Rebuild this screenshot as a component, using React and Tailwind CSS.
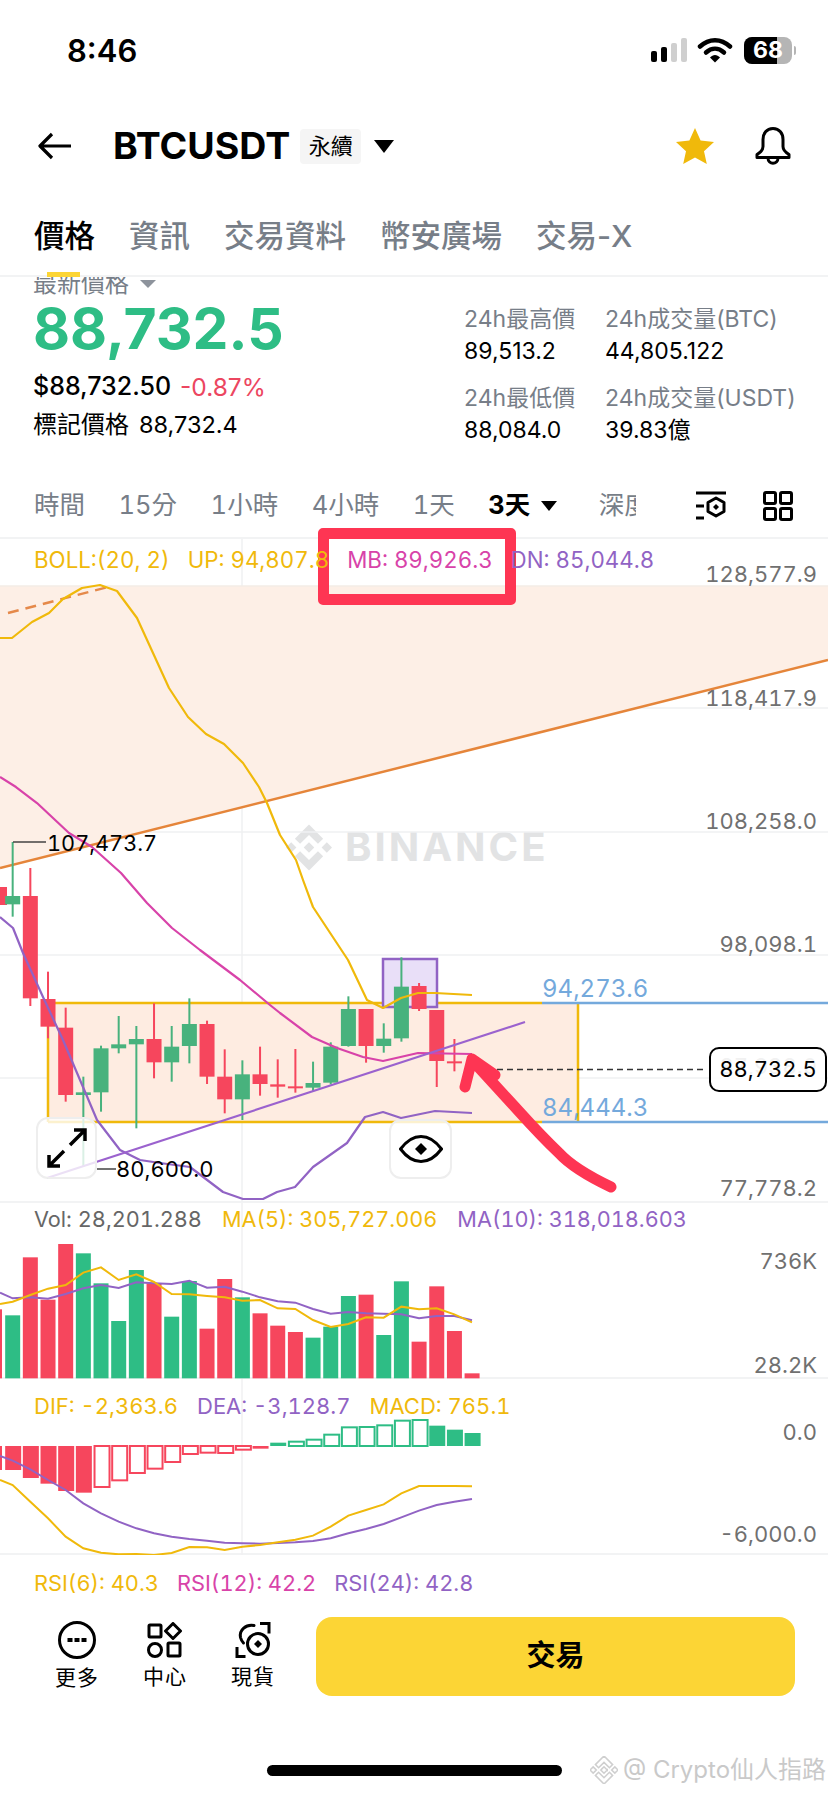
import React from "react";

const YELLOW = "#F0B90B";
const MAGENTA = "#D843A9";
const PURPLE = "#9163C4";
const GREEN = "#2EBD85";
const RED = "#F6465D";
const CANDLE_GREEN = "#48B27D";

const slotX = (i) => 12.67 + 17.67 * i;
const line = (pts) => pts.map((p) => p.join(",")).join(" ");

// zoomed coordinates, y is page y = base + z / 3
const scaled = (rows, base) => rows.map(([x, z]) => [x / 3, base + z / 3]);

const upperBand = [
  [0, 638], [12, 638], [32, 622], [49, 613], [63, 599], [82, 588], [100, 585], [117, 591], [137, 618], [153, 653],
  [169, 688], [188, 717], [206, 734], [224, 744], [243, 763], [259, 787], [267, 803], [280, 835], [296, 860], [303, 880],
  [313, 907], [348, 960], [367, 1000], [383, 1008], [401, 998], [418, 993], [435, 993], [472, 995],
];
const midBand = [
  [0, 777], [16, 787], [37, 803], [69, 833], [92, 847], [121, 873], [147, 903], [172, 928], [200, 950], [240, 980],
  [270, 1005], [280, 1013], [312, 1037], [337, 1048], [363, 1057], [383, 1061], [418, 1053], [472, 1054],
];
const lowerBand = [
  [0, 917], [13, 928], [23, 953], [43, 997], [63, 1040], [83, 1087], [97, 1120], [120, 1150], [140, 1160], [160, 1163],
  [190, 1167], [223, 1192], [243, 1199], [263, 1199], [277, 1192], [295, 1187], [313, 1167], [347, 1143], [365, 1117],
  [383, 1112], [401, 1118], [435, 1111], [472, 1113],
];

// [colour, body top, body bottom, wick top, wick bottom], slot by slot
const candles = [
  ["g", 48, 73, -114, 110], ["r", 48, 355, -36, 378], ["r", 357, 440, 275, 475], ["r", 443, 645, 383, 665],
  ["g", 637, 645, 590, 860], ["g", 505, 637, 497, 695], ["g", 493, 505, 408, 520], ["g", 477, 493, 438, 745],
  ["r", 477, 547, 370, 595], ["g", 500, 547, 438, 605], ["g", 432, 498, 355, 550], ["r", 432, 590, 422, 612],
  ["r", 590, 658, 508, 700], ["g", 583, 658, 541, 720], ["r", 583, 612, 500, 647], ["r", 613, 620, 538, 653],
  ["r", 619, 625, 507, 638], ["g", 609, 623, 545, 635], ["g", 500, 608, 487, 613], ["g", 387, 498, 349, 500],
  ["r", 387, 498, 387, 548], ["g", 476, 498, 430, 518], ["g", 320, 475, 232, 485], ["r", 318, 387, 309, 393],
  ["r", 390, 543, 390, 621], ["r", 544, 550, 477, 574],
];

const volumes = [
  ["g", 376], ["r", 202], ["r", 329], ["r", 162], ["g", 190], ["g", 280], ["g", 393], ["g", 240], ["r", 280],
  ["g", 380], ["g", 273], ["r", 416], ["r", 267], ["g", 322], ["r", 370], ["r", 407], ["r", 426], ["g", 443],
  ["g", 410], ["g", 318], ["r", 314], ["g", 435], ["g", 274], ["r", 455], ["r", 289], ["r", 423], ["r", 550],
];
const ma5 = scaled(
  [[0, 342], [38, 335], [91, 315], [144, 296], [197, 285], [250, 248], [303, 232], [356, 270], [409, 253], [462, 276],
    [515, 312], [568, 313], [621, 318], [674, 322], [727, 332], [780, 330], [833, 355], [886, 357], [939, 390], [992, 411],
    [1045, 402], [1098, 382], [1151, 383], [1204, 350], [1257, 358], [1310, 355], [1363, 373], [1416, 397]],
  1190
);
const ma10 = scaled(
  [[0, 308], [38, 325], [91, 322], [144, 326], [197, 312], [250, 295], [303, 285], [356, 294], [409, 277], [462, 280],
    [515, 282], [568, 272], [621, 293], [674, 290], [727, 305], [780, 322], [833, 334], [886, 338], [939, 357], [992, 371],
    [1045, 366], [1098, 370], [1151, 371], [1204, 373], [1257, 385], [1310, 378], [1363, 378], [1416, 391]],
  1190
);

// [colour, end z, hollow]
const macdBars = [
  ["r", 240, 0], ["r", 264, 0], ["r", 281, 0], ["r", 303, 0], ["r", 308, 0], ["r", 291, 1], ["r", 271, 1], ["r", 249, 1],
  ["r", 236, 1], ["r", 216, 1], ["r", 192, 1], ["r", 188, 1], ["r", 189, 1], ["r", 179, 1], ["r", 176, 0], ["g", 158, 0],
  ["g", 155, 1], ["g", 149, 1], ["g", 134, 1], ["g", 112, 1], ["g", 111, 1], ["g", 106, 1], ["g", 92, 1], ["g", 90, 1],
  ["g", 107, 0], ["g", 119, 0], ["g", 129, 0],
];
const dif = scaled(
  [[0, 270], [38, 285], [91, 335], [144, 385], [197, 440], [250, 475], [303, 488], [356, 493], [409, 492], [462, 495],
    [515, 489], [568, 471], [621, 472], [674, 480], [727, 470], [780, 465], [833, 457], [886, 449], [939, 437], [992, 410],
    [1045, 377], [1098, 360], [1151, 343], [1204, 310], [1257, 288], [1310, 288], [1363, 288], [1416, 289]],
  1390
);
const dea = scaled(
  [[0, 198], [38, 212], [91, 238], [144, 270], [197, 300], [250, 340], [303, 370], [356, 395], [409, 415], [462, 430],
    [515, 440], [568, 447], [621, 452], [674, 458], [727, 460], [780, 461], [833, 459], [886, 457], [939, 453], [992, 445],
    [1045, 430], [1098, 417], [1151, 402], [1204, 382], [1257, 362], [1310, 345], [1363, 335], [1416, 327]],
  1390
);

const BINANCE_MARK =
  "M38.73 53.2l24.59-24.58 24.6 24.6 14.3-14.31L63.32 0 24.43 38.9zM0 63.31l14.3-14.31 14.31 14.31-14.31 14.3zM38.73 73.41l24.59 24.59 24.6-24.6 14.31 14.29-38.9 38.91-38.91-38.88zM98 63.31l14.3-14.31 14.31 14.3-14.31 14.32zM77.83 63.3L63.32 48.78 52.59 59.51l-1.24 1.23-2.54 2.54 14.51 14.5 14.51-14.5z";

const StatusBar = () => (
  <div className="h-[100px] flex items-center justify-between pl-[67px] pr-[32px]">
    <span className="text-[31px] font-semibold text-black leading-none">8:46</span>
    <div className="flex items-center">
      <div className="flex items-end gap-[4px] h-[24px]">
        <div className="w-[6px] h-[11px] rounded-[2px] bg-black" />
        <div className="w-[6px] h-[15px] rounded-[2px] bg-black" />
        <div className="w-[6px] h-[19px] rounded-[2px] bg-[#cfcfcf]" />
        <div className="w-[6px] h-[24px] rounded-[2px] bg-[#cfcfcf]" />
      </div>
      <svg width="36" height="26" viewBox="0 0 36 26" className="ml-[10px]">
        <path d="M3 9.5C12 1 24 1 33 9.5" fill="none" stroke="black" strokeWidth="4.5" strokeLinecap="round" />
        <path d="M9 15.5C14.5 10.5 21.5 10.5 27 15.5" fill="none" stroke="black" strokeWidth="4.5" strokeLinecap="round" />
        <path d="M13 20.5C16 17 20 17 23 20.5L18 25.5z" fill="black" />
      </svg>
      <div className="ml-[11px] relative w-[48px] h-[27px] rounded-[8px] overflow-hidden flex bg-[#b5b5b5]">
        <div className="w-[33px] h-full bg-black" />
        <span className="absolute inset-0 flex items-center justify-center text-[23px] font-bold text-white leading-none">68</span>
      </div>
      <div className="ml-[2px] w-[2px] h-[9px] rounded-r-[2px] bg-[#b5b5b5]" />
    </div>
  </div>
);

const Header = () => (
  <div className="h-[92px] flex items-center pl-[38px] pr-[36px]">
    <svg width="34" height="28" viewBox="0 0 34 28">
      <path d="M33 14H3M14 2L2 14l12 12" fill="none" stroke="black" strokeWidth="3.2" strokeLinejoin="round" />
    </svg>
    <span className="ml-[41px] text-[37.5px] font-bold text-black leading-none">BTCUSDT</span>
    <span className="ml-[10px] w-[61px] h-[35px] rounded-[4px] bg-[#f5f5f5] flex items-center justify-center text-[22px] text-black">永續</span>
    <svg width="20" height="13" viewBox="0 0 20 13" className="ml-[13px]">
      <path d="M0 0h20L10 13z" fill="black" />
    </svg>
    <svg width="38" height="36" viewBox="0 0 38 36" className="ml-auto">
      <path d="M19 0l5.6 12.6L38 14l-10 9.2L30.8 36 19 29.4 7.2 36 10 23.2 0 14l13.4-1.4z" fill="#F0B90B" />
    </svg>
    <svg width="38" height="38" viewBox="0 0 36 38" className="ml-[40px]">
      <path
        d="M18 1.5c-6.5 0-10 5-10 11v7c0 3-2 5.500-6 8v3h32v-3c-4-2.500-6-5-6-8v-7c0-6-3.500-11-10-11zM13 31c0 7 10 7 10 0"
        fill="none"
        stroke="black"
        strokeWidth="3"
        strokeLinejoin="round"
      />
    </svg>
  </div>
);

const Tabs = () => (
  <div className="h-[85px] flex items-center pt-[4px] pl-[34px] gap-[34px] text-[30.5px] font-medium text-[#777e88] border-b-2 border-[#f2f3f4]">
    <span className="relative text-black leading-[79px]">
      價格
      <span className="absolute left-[13px] -bottom-[2px] w-[33px] h-[5px] bg-[#FCD535]" />
    </span>
    <span>資訊</span>
    <span>交易資料</span>
    <span>幣安廣場</span>
    <span>交易-X</span>
  </div>
);

const PriceInfo = () => (
  <div className="h-[197px] overflow-hidden flex">
    <div className="w-[430px] pl-[33px] -mt-[5px]">
      <div className="flex items-center h-[24px] text-[24px] leading-[24px] text-[#777e88]">
        最新價格
        <svg width="16" height="8" viewBox="0 0 16 8" className="ml-[11px]">
          <path d="M0 0h16L8 8z" fill="#8d939c" />
        </svg>
      </div>
      <div className="mt-[1px] h-[64px] text-[57px] leading-[64px] font-bold text-[#2EBD85]">88,732.5</div>
      <div className="mt-[11px] h-[30px] flex items-center text-[25px] font-medium text-black">
        $88,732.50
        <span className="ml-[9px] text-[24.5px] font-normal text-[#EC4660]">-0.87%</span>
      </div>
      <div className="mt-[8px] h-[30px] flex items-center text-[24px] text-black">
        標記價格
        <span className="ml-[10px] text-[23.5px]">88,732.4</span>
      </div>
    </div>
    <div className="ml-[34px] pt-[27px] grid grid-cols-[141px_auto] grid-rows-[32px_47px_32px_32px] text-[23px] leading-[30px]">
      <span className="text-[#777e88]">24h最高價</span>
      <span className="text-[#777e88]">24h成交量(BTC)</span>
      <span className="text-black">89,513.2</span>
      <span className="text-black">44,805.122</span>
      <span className="text-[#777e88]">24h最低價</span>
      <span className="text-[#777e88]">24h成交量(USDT)</span>
      <span className="text-black">88,084.0</span>
      <span className="text-black">39.83億</span>
    </div>
  </div>
);

const TimeRow = () => (
  <div className="h-[65px] flex items-center pl-[34px] pr-[35px] gap-[33.5px] text-[25.5px] tabular-nums text-[#777e88] border-b-2 border-[#f2f3f4]">
    <span>時間</span>
    <span>15分</span>
    <span>1小時</span>
    <span>4小時</span>
    <span>1天</span>
    <span className="flex items-center font-bold text-black">
      3天
      <svg width="16" height="10" viewBox="0 0 16 10" className="ml-[11px]">
        <path d="M0 0h16L8 10z" fill="black" />
      </svg>
    </span>
    <span className="ml-[8px] w-[37px] overflow-hidden whitespace-nowrap">深度</span>
    <svg width="32" height="30" viewBox="0 0 32 30" className="ml-auto">
      <path d="M1 2h30M1 15h8M1 27h8" fill="none" stroke="black" strokeWidth="3" />
      <path d="M21 7l8 4.500v9L21 25l-8-4.500v-9z" fill="none" stroke="black" strokeWidth="3" strokeLinejoin="round" />
      <path d="M21 13l3 3-3 3-3-3z" fill="black" />
    </svg>
    <svg width="30" height="30" viewBox="0 0 30 30" className="ml-[3px]">
      <g fill="none" stroke="black" strokeWidth="3">
        <rect x="1.500" y="1.500" width="11" height="11" rx="1.500" />
        <rect x="17.500" y="1.500" width="11" height="11" rx="1.500" />
        <rect x="1.500" y="17.500" width="11" height="11" rx="1.500" />
        <rect x="17.500" y="17.500" width="11" height="11" rx="1.500" />
      </g>
    </svg>
  </div>
);

const MainChart = () => (
  <div className="relative h-[664px] border-b-2 border-[#f2f3f4] tabular-nums">
    <div className="relative z-10 h-[42px] flex items-center pl-[34px] gap-[18px] text-[22.3px] whitespace-nowrap">
      <span className="text-[#F0B90B]">BOLL:(20, 2)</span>
      <span className="text-[#F0B90B]">UP: 94,807.8</span>
      <span className="text-[#D843A9]">MB: 89,926.3</span>
      <span className="text-[#9163C4]">DN: 85,044.8</span>
    </div>

    {/* watermark sits under the chart lines */}
    <svg width="46" height="51" viewBox="0 0 126.61 126.61" className="absolute left-[286px] top-[283px]">
      <path d={BINANCE_MARK} fill="#e2e3e4" />
    </svg>
    <span className="absolute left-[345px] top-[288px] text-[40px] leading-[40px] font-bold tracking-[3px] text-[#e2e3e4]">BINANCE</span>

    <svg viewBox="0 539 828 663" className="absolute left-0 top-0 w-[828px] h-[663px]">
      <path d="M242 539V1202M0 708H828M0 832H828M0 955H828M0 1078H828" stroke="#f0f1f2" strokeWidth="1.500" fill="none" />
      <polygon points="0,586 828,586 828,660 0,868" fill="#fdefe6" />
      <path d="M0 586H828" stroke="#f3ece6" strokeWidth="1.500" />
      <rect x="48" y="1003" width="530" height="119" fill="#feece1" />
      <path d="M48 1122V1003H542M542 1122H48M578 1003V1122" fill="none" stroke="#F0B90B" strokeWidth="2.500" />
      <path d="M542 1003H828M542 1122H828" fill="none" stroke="#74A9DC" strokeWidth="2.500" />
      <path d="M8 613L108 587" fill="none" stroke="#E5894A" strokeWidth="2.500" strokeDasharray="11 7" />
      <path d="M0 868L828 660" stroke="#E5853A" strokeWidth="2.500" />
      <rect x="383" y="959" width="54" height="48" fill="#e9dff8" stroke="#9163C4" strokeWidth="2.500" />

      <rect x="0" y="887" width="7" height="18" fill={RED} />
      {candles.map(([c, top, bottom, wickTop, wickBottom], i) => {
        const fill = c === "g" ? CANDLE_GREEN : RED;
        return (
          <g key={i} fill={fill}>
            <rect x={slotX(i) - 1} y={880 + wickTop / 3} width="2" height={(wickBottom - wickTop) / 3} />
            <rect x={slotX(i) - 7.5} y={880 + top / 3} width="15" height={Math.max((bottom - top) / 3, 2)} />
          </g>
        );
      })}
      <path d="M13 842H46M97 1169H116" fill="none" stroke="#444" strokeWidth="1.500" />

      <g fill="none" strokeWidth="2.200" strokeLinejoin="round">
        <polyline points={line(upperBand)} stroke={YELLOW} />
        <polyline points={line(midBand)} stroke={MAGENTA} />
        <polyline points={line(lowerBand)} stroke={PURPLE} />
        <path d="M47 1178L525 1022" stroke="#9B62CE" />
      </g>
      <path d="M497 1069.500H706" stroke="#333" strokeWidth="1.500" strokeDasharray="6 4" />
    </svg>

    {/* axis labels */}
    <div className="absolute right-[11px] top-[21px] text-[22px] leading-[28px] text-[#707070]">128,577.9</div>
    <div className="absolute right-[11px] top-[145px] text-[22px] leading-[28px] text-[#707070]">118,417.9</div>
    <div className="absolute right-[11px] top-[268px] text-[22px] leading-[28px] text-[#707070]">108,258.0</div>
    <div className="absolute right-[11px] top-[391px] text-[22px] leading-[28px] text-[#707070]">98,098.1</div>
    <div className="absolute right-[11px] top-[513px] text-[22px] leading-[28px] text-[#707070]">87,938.0</div>
    <div className="absolute right-[11px] top-[635px] text-[22px] leading-[28px] text-[#707070]">77,778.2</div>

    <div className="absolute left-[542px] top-[436px] text-[24px] leading-[28px] text-[#74A9DC]">94,273.6</div>
    <div className="absolute left-[542px] top-[555px] text-[24px] leading-[28px] text-[#74A9DC]">84,444.3</div>
    <div className="absolute left-[47px] top-[290px] text-[21.7px] leading-[28px] text-black">107,473.7</div>
    <div className="absolute left-[116px] top-[616px] text-[22px] leading-[28px] text-black">80,600.0</div>

    <div className="absolute left-[709px] top-[508px] w-[118px] h-[45px] rounded-[10px] border-2 border-black bg-white/90 flex items-center justify-center text-[22px] text-black">
      88,732.5
    </div>

    <div className="absolute left-[36px] top-[578px] w-[61px] h-[62px] rounded-[12px] border-2 border-[#eeeeee] bg-white/80 flex items-center justify-center">
      <svg width="42" height="42" viewBox="0 0 42 42">
        <path d="M24 18L39 3M28 3h11v11M18 24L3 39M3 28v11h11" fill="none" stroke="black" strokeWidth="3.500" />
      </svg>
    </div>
    <div className="absolute left-[389px] top-[580px] w-[63px] h-[60px] rounded-[12px] border-2 border-[#eeeeee] bg-white/80 flex items-center justify-center">
      <svg width="44" height="28" viewBox="0 0 44 28">
        <path d="M1.500 14C9 4 15 1.500 22 1.500S35 4 42.500 14C35 24 29 26.500 22 26.500S9 24 1.500 14z" fill="none" stroke="black" strokeWidth="3" />
        <path d="M22 8l6 6-6 6-6-6z" fill="black" />
      </svg>
    </div>

    {/* annotations on top of the screenshot */}
    <div className="absolute left-[318px] -top-[11px] w-[198px] h-[77px] rounded-[5px] border-[11px] border-[#FE3553]" />
    <svg viewBox="0 539 828 663" className="absolute left-0 top-0 w-[828px] h-[663px] pointer-events-none">
      <path
        d="M611 1187C590 1177 570 1165 559 1153C540 1135 525 1118 515 1107L472 1060M495 1075L472 1059L465 1087"
        fill="none"
        stroke="#FE3553"
        strokeWidth="11"
        strokeLinecap="round"
        strokeLinejoin="round"
      />
    </svg>
  </div>
);

const VolumePane = () => (
  <div className="relative h-[176px] border-b-2 border-[#f2f3f4] tabular-nums">
    <svg viewBox="0 1203 828 176" className="absolute left-0 top-0 w-[828px] h-[176px]">
      <path d="M242 1203V1379" stroke="#f0f1f2" strokeWidth="1.500" />
      <rect x="0" y={1190 + 358 / 3} width="2" height={(565 - 358) / 3} fill={RED} />
      {volumes.map(([c, top], i) => (
        <rect
          key={i}
          x={slotX(i) - 7.5}
          y={1190 + top / 3}
          width="15"
          height={(565 - top) / 3}
          fill={c === "g" ? GREEN : RED}
        />
      ))}
      <polyline points={line(ma10)} fill="none" stroke={PURPLE} strokeWidth="2" />
      <polyline points={line(ma5)} fill="none" stroke={YELLOW} strokeWidth="2" />
    </svg>
    <div className="relative h-[32px] flex items-center pl-[34px] gap-[20px] text-[21.7px] whitespace-nowrap">
      <span className="text-[#666666]">Vol: 28,201.288</span>
      <span className="text-[#F0B90B]">MA(5): 305,727.006</span>
      <span className="text-[#9163C4]">MA(10): 318,018.603</span>
    </div>
    <div className="absolute right-[11px] top-[44px] text-[22px] leading-[28px] text-[#707070]">736K</div>
    <div className="absolute right-[11px] top-[148px] text-[22px] leading-[28px] text-[#707070]">28.2K</div>
  </div>
);

const MacdPane = () => (
  <div className="relative h-[176px] border-b-2 border-[#f2f3f4] tabular-nums">
    <svg viewBox="0 1379 828 176" className="absolute left-0 top-0 w-[828px] h-[176px]">
      <path d="M242 1379V1555" stroke="#f0f1f2" strokeWidth="1.500" />
      <rect x="0" y="1446" width="2" height="24" fill={RED} />
      {macdBars.map(([c, end, hollow], i) => {
        const color = c === "g" ? GREEN : RED;
        const endY = 1390 + end / 3;
        const y = Math.min(endY, 1446);
        const h = Math.abs(endY - 1446);
        return hollow ? (
          <rect key={i} x={slotX(i) - 6.5} y={y} width="15" height={h} fill="white" stroke={color} strokeWidth="2" />
        ) : (
          <rect key={i} x={slotX(i) - 7.5} y={y} width="16" height={h} fill={color} />
        );
      })}
      <polyline points={line(dea)} fill="none" stroke={PURPLE} strokeWidth="2" />
      <polyline points={line(dif)} fill="none" stroke={YELLOW} strokeWidth="2" />
    </svg>
    <div className="relative pt-[12px] h-[42px] flex items-center pl-[34px] gap-[19px] text-[22px] whitespace-nowrap">
      <span className="text-[#F0B90B]">DIF: -2,363.6</span>
      <span className="text-[#9163C4]">DEA: -3,128.7</span>
      <span className="text-[#F0B90B]">MACD: 765.1</span>
    </div>
    <div className="absolute right-[11px] top-[39px] text-[22px] leading-[28px] text-[#707070]">0.0</div>
    <div className="absolute right-[11px] top-[141px] text-[22px] leading-[28px] text-[#707070]">-6,000.0</div>
  </div>
);

const BottomBar = () => (
  <div className="h-[90px] flex items-center pl-[33px] pr-[33px] text-[21px] text-black">
    <div className="w-[88px] flex flex-col items-center gap-[6px]">
      <svg width="38" height="38" viewBox="0 0 38 38">
        <circle cx="19" cy="19" r="17.500" fill="none" stroke="black" strokeWidth="3" />
        <path d="M9.500 17h5v4h-5zM16.500 17h5v4h-5zM23.500 17h5v4h-5z" fill="black" />
      </svg>
      <span className="leading-[26px] tracking-[1px]">更多</span>
    </div>
    <div className="w-[88px] flex flex-col items-center gap-[6px]">
      <svg width="36" height="36" viewBox="0 0 36 36">
        <g fill="none" stroke="black" strokeWidth="3">
          <rect x="2" y="3" width="12" height="12" rx="1" />
          <path d="M26 1.500l7.500 7.500-7.500 7.500L18.500 9z" strokeLinejoin="round" />
          <circle cx="8" cy="28" r="6.500" />
          <rect x="21" y="21" width="12" height="13" rx="1" />
        </g>
      </svg>
      <span className="leading-[26px] tracking-[1px]">中心</span>
    </div>
    <div className="w-[88px] flex flex-col items-center gap-[6px]">
      <svg width="36" height="36" viewBox="0 0 36 36">
        <g fill="none" stroke="black" strokeWidth="3">
          <path d="M25 1.500h9v10M10.500 34.500H2V25" />
          <path d="M19 3.500C11 2 4 8 5.500 15.500c.5 2 1.500 4 3 5.500" strokeLinecap="round" />
          <circle cx="23" cy="22" r="10.500" />
        </g>
        <path d="M23 18l4 4-4 4-4-4z" fill="black" />
      </svg>
      <span className="leading-[26px] tracking-[1px]">現貨</span>
    </div>
    <button className="ml-[19px] flex-1 h-[79px] rounded-[16px] bg-[#FCD535] text-[29px] font-semibold text-black flex items-center justify-center">
      交易
    </button>
  </div>
);

const App = () => (
  <div className="w-[828px] h-[1793px] bg-white overflow-hidden font-[Inter,'Noto_Sans_CJK_TC',sans-serif]">
    <StatusBar />
    <Header />
    <Tabs />
    <PriceInfo />
    <TimeRow />
    <MainChart />
    <VolumePane />
    <MacdPane />
    <div className="h-[56px] flex items-center pl-[34px] gap-[18px] text-[21.8px] tabular-nums whitespace-nowrap">
      <span className="text-[#F0B90B]">RSI(6): 40.3</span>
      <span className="text-[#D843A9]">RSI(12): 42.2</span>
      <span className="text-[#9163C4]">RSI(24): 42.8</span>
    </div>
    <BottomBar />
    <div className="mt-[55px] flex items-center">
      <div className="ml-[267px] shrink-0 w-[295px] h-[11px] rounded-full bg-black" />
      <svg width="28" height="28" viewBox="0 0 126.61 126.61" className="ml-[28px] shrink-0">
        <path d={BINANCE_MARK} fill="none" stroke="#cfcfcf" strokeWidth="7" />
      </svg>
      <span className="ml-[5px] text-[24px] leading-none text-[#c9c9c9] whitespace-nowrap">@ Crypto仙人指路</span>
    </div>
  </div>
);

export default App;
